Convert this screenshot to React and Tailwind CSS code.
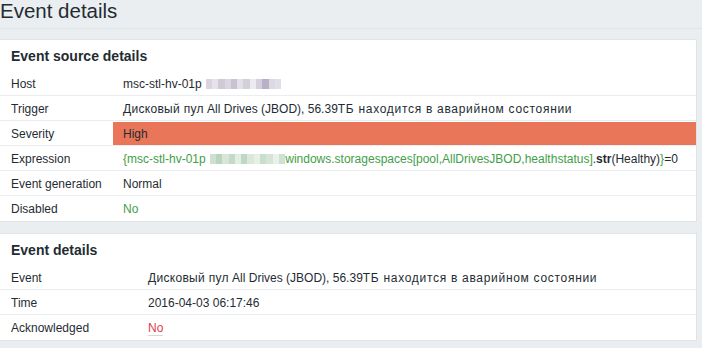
import React from "react";

const Blur = ({ tones }) => (
  <span className="inline-flex items-center align-middle ml-[4px] h-[14px]">
    {tones.map((c, i) => (
      <span key={i} className="inline-block w-[6.3px] h-[10px]" style={{ background: c }} />
    ))}
  </span>
);

const hostTones = ["#d9d4de", "#e6e2ea", "#cfcad6", "#dcd6e2", "#c9c1d1", "#e4e0e8", "#d3d0dc", "#ecebf0", "#d4cfdc", "#b9b0c6", "#ddd9e2", "#e2dee8"];
const exprTones = ["#cfe0d2", "#b9d5bd", "#d6e6d8", "#c3dbc6", "#e2ede3", "#bfd8c2", "#d9e8db", "#e6f0e7", "#c8dfcb", "#d5e6d7", "#e9f2ea", "#cde2d0"];

function Row({ label, children, col, last, cls = "" }) {
  return (
    <div className={`flex h-[25px] items-center pt-[1px] ${last ? "" : "border-b border-[#ebeef0]"}`}>
      <div className={`${col} pl-[11px] shrink-0`}>{label}</div>
      <div className={`flex-1 h-full flex items-center pl-[10px] ${cls}`}>{children}</div>
    </div>
  );
}

const Trigger = () => (
  <span>
    <span className="tracking-[0.3px]">Дисковый пул</span> All Drives (JBOD), 56.39
    <span className="tracking-[0.7px]">ТБ находится в аварийном состоянии</span>
  </span>
);

export default function App() {
  return (
    <div className="w-[702px] h-[348px] bg-[#ebeef0] text-[#1f2c33] text-[12px] overflow-hidden" style={{ fontFamily: "'Liberation Sans', Arial, sans-serif" }}>
      <div className="h-[29px] border-b border-[#dfe4e7] flex items-start">
        <h1 className="text-[20.5px] leading-[24px] -mt-[1px]">Event details</h1>
      </div>
      <div className="pt-[10px] pr-[5px]">
        <div className="bg-white border border-[#dfe4e7] border-l-0">
          <h4 className="font-bold text-[14px] leading-[16px] h-[31px] pt-[8px] pl-[11px] text-[#1f2c33]">Event source details</h4>
          <Row label="Host" col="w-[113px]">
            msc-stl-hv-01p<Blur tones={hostTones} />
          </Row>
          <Row label="Trigger" col="w-[113px]">
            <Trigger />
          </Row>
          <Row label="Severity" col="w-[113px]" cls="bg-[#e97659] -mt-[1px] pt-[1px]">
            High
          </Row>
          <Row label="Expression" col="w-[113px]">
            <span className="text-[#429e47]">{"{msc-stl-hv-01p"}</span>
            <Blur tones={exprTones} />
            <span className="text-[#429e47]">windows.storagespaces[pool,AllDrivesJBOD,healthstatus]</span>
            <span>.</span>
            <span className="font-bold">str</span>
            <span>(Healthy)</span>
            <span className="text-[#429e47]">{"}"}</span>
            <span>=0</span>
          </Row>
          <Row label="Event generation" col="w-[113px]">
            Normal
          </Row>
          <Row label="Disabled" col="w-[113px]" last>
            <span className="text-[#429e47]">No</span>
          </Row>
        </div>
        <div className="mt-[11px] bg-white border border-[#dfe4e7] border-l-0">
          <h4 className="font-bold text-[14px] leading-[16px] h-[31px] pt-[8px] pl-[11px] text-[#1f2c33]">Event details</h4>
          <Row label="Event" col="w-[138px]">
            <Trigger />
          </Row>
          <Row label="Time" col="w-[138px]">
            2016-04-03 06:17:46
          </Row>
          <Row label="Acknowledged" col="w-[138px]" last>
            <span className="text-[#e33a4a] border-b border-[#d5d9dc] leading-[14px]">No</span>
          </Row>
        </div>
      </div>
    </div>
  );
}
